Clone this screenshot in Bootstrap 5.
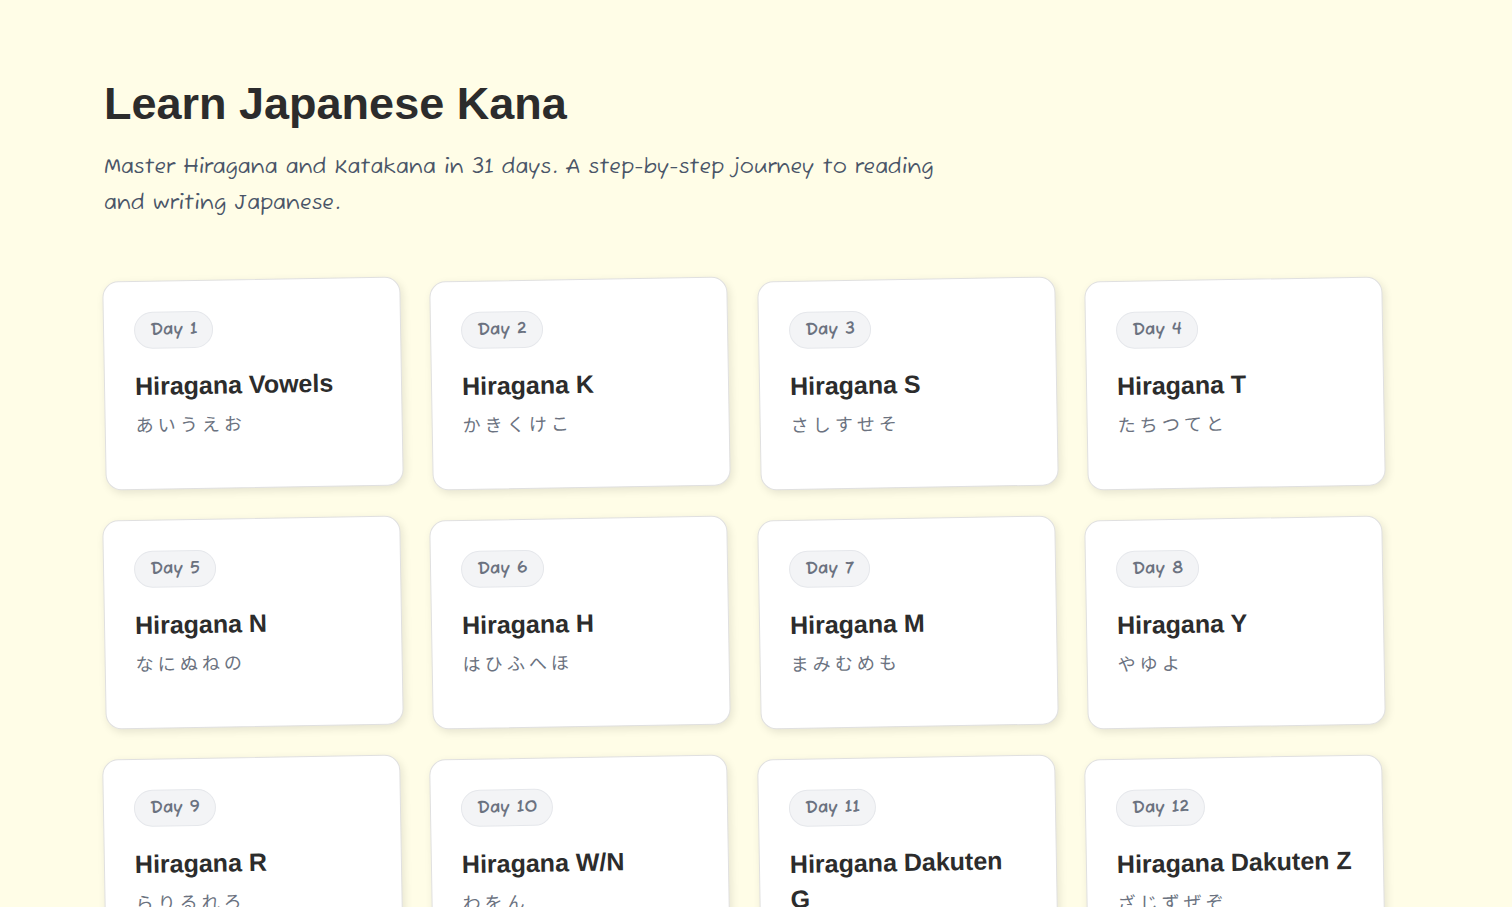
<!DOCTYPE html>
<html lang="en">
<head>
<meta charset="utf-8">
<meta name="viewport" content="width=device-width, initial-scale=1">
<title>Learn Japanese Kana</title>
<link href="https://cdn.jsdelivr.net/npm/bootstrap@5.3.0/dist/css/bootstrap.min.css" rel="stylesheet">
<style>
  body { background: #fffde7; color: #2c2c2c; font-family: "Liberation Sans", "Noto Sans CJK JP", sans-serif; }
  .page-inner { max-width: 1280px; padding-top: 29px; }
  .page-title { font-size: 45px; line-height: 54px; margin-bottom: 18px; }
  .hand { font-family: "Fuzzy Bubbles", Lato, sans-serif; }
  .intro { max-width: 864px; font-size: 21px; line-height: 36px; color: #4a5568; margin-bottom: 58px; }
  .day-grid { --bs-gutter-x: 29px; --bs-gutter-y: 30px; }
  .day-card { min-height: 209px; padding: 30px; border: 1px solid #e0e0e0; border-radius: 16px; box-shadow: 2px 3px 8px rgba(0, 0, 0, .1); transform: rotate(-1deg); }
  .day-pill { padding: 5px 15px; border: 1px solid #e5e7eb; background: #f3f4f6; color: #6b7280; font-size: 17px; line-height: 25px; margin-bottom: 20px; }
  .day-title { font-size: 25px; line-height: 35px; }
  .kana { font-family: "Noto Sans CJK JP", sans-serif; font-size: 18px; line-height: 24px; color: #6b7280; }
</style>
</head>
<body>
<main class="pe-4 py-5">
  <div class="page-inner mx-auto">
    <header>
      <h1 class="page-title fw-bold">Learn Japanese Kana</h1>
      <p class="intro hand">Master Hiragana and Katakana in 31 days. A step-by-step journey to reading and writing Japanese.</p>
    </header>
    <div class="row row-cols-1 row-cols-md-2 row-cols-xl-4 day-grid">
      <div class="col"><article class="card day-card h-100 align-items-start"><span class="day-pill hand fw-bold rounded-pill">Day 1</span><h2 class="day-title fw-bold mb-2"><a class="stretched-link text-reset text-decoration-none" href="#day-1">Hiragana Vowels</a></h2><p class="kana mb-0" lang="ja">あ い う え お</p></article></div>
      <div class="col"><article class="card day-card h-100 align-items-start"><span class="day-pill hand fw-bold rounded-pill">Day 2</span><h2 class="day-title fw-bold mb-2"><a class="stretched-link text-reset text-decoration-none" href="#day-2">Hiragana K</a></h2><p class="kana mb-0" lang="ja">か き く け こ</p></article></div>
      <div class="col"><article class="card day-card h-100 align-items-start"><span class="day-pill hand fw-bold rounded-pill">Day 3</span><h2 class="day-title fw-bold mb-2"><a class="stretched-link text-reset text-decoration-none" href="#day-3">Hiragana S</a></h2><p class="kana mb-0" lang="ja">さ し す せ そ</p></article></div>
      <div class="col"><article class="card day-card h-100 align-items-start"><span class="day-pill hand fw-bold rounded-pill">Day 4</span><h2 class="day-title fw-bold mb-2"><a class="stretched-link text-reset text-decoration-none" href="#day-4">Hiragana T</a></h2><p class="kana mb-0" lang="ja">た ち つ て と</p></article></div>
      <div class="col"><article class="card day-card h-100 align-items-start"><span class="day-pill hand fw-bold rounded-pill">Day 5</span><h2 class="day-title fw-bold mb-2"><a class="stretched-link text-reset text-decoration-none" href="#day-5">Hiragana N</a></h2><p class="kana mb-0" lang="ja">な に ぬ ね の</p></article></div>
      <div class="col"><article class="card day-card h-100 align-items-start"><span class="day-pill hand fw-bold rounded-pill">Day 6</span><h2 class="day-title fw-bold mb-2"><a class="stretched-link text-reset text-decoration-none" href="#day-6">Hiragana H</a></h2><p class="kana mb-0" lang="ja">は ひ ふ へ ほ</p></article></div>
      <div class="col"><article class="card day-card h-100 align-items-start"><span class="day-pill hand fw-bold rounded-pill">Day 7</span><h2 class="day-title fw-bold mb-2"><a class="stretched-link text-reset text-decoration-none" href="#day-7">Hiragana M</a></h2><p class="kana mb-0" lang="ja">ま み む め も</p></article></div>
      <div class="col"><article class="card day-card h-100 align-items-start"><span class="day-pill hand fw-bold rounded-pill">Day 8</span><h2 class="day-title fw-bold mb-2"><a class="stretched-link text-reset text-decoration-none" href="#day-8">Hiragana Y</a></h2><p class="kana mb-0" lang="ja">や ゆ よ</p></article></div>
      <div class="col"><article class="card day-card h-100 align-items-start"><span class="day-pill hand fw-bold rounded-pill">Day 9</span><h2 class="day-title fw-bold mb-2"><a class="stretched-link text-reset text-decoration-none" href="#day-9">Hiragana R</a></h2><p class="kana mb-0" lang="ja">ら り る れ ろ</p></article></div>
      <div class="col"><article class="card day-card h-100 align-items-start"><span class="day-pill hand fw-bold rounded-pill">Day 10</span><h2 class="day-title fw-bold mb-2"><a class="stretched-link text-reset text-decoration-none" href="#day-10">Hiragana W/N</a></h2><p class="kana mb-0" lang="ja">わ を ん</p></article></div>
      <div class="col"><article class="card day-card h-100 align-items-start"><span class="day-pill hand fw-bold rounded-pill">Day 11</span><h2 class="day-title fw-bold mb-2"><a class="stretched-link text-reset text-decoration-none" href="#day-11">Hiragana Dakuten G</a></h2><p class="kana mb-0" lang="ja">が ぎ ぐ げ ご</p></article></div>
      <div class="col"><article class="card day-card h-100 align-items-start"><span class="day-pill hand fw-bold rounded-pill">Day 12</span><h2 class="day-title fw-bold mb-2"><a class="stretched-link text-reset text-decoration-none" href="#day-12">Hiragana Dakuten Z</a></h2><p class="kana mb-0" lang="ja">ざ じ ず ぜ ぞ</p></article></div>
    </div>
  </div>
</main>
<script src="https://cdn.jsdelivr.net/npm/bootstrap@5.3.0/dist/js/bootstrap.bundle.min.js"></script>
</body>
</html>
